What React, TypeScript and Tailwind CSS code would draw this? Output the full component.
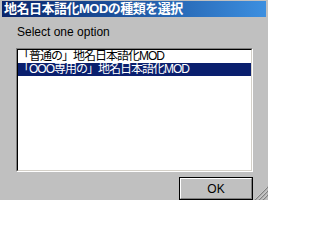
import React from "react";

const font = { fontFamily: '"Liberation Sans", "Noto Sans CJK JP", sans-serif' };

export default function App() {
  return (
    <div
      className="relative flex h-[200px] w-[268px] flex-col overflow-hidden bg-[#c0c0c0] text-black"
      style={font}
    >
      <div className="mx-[2px] mt-[1px] flex h-[16px] items-center bg-gradient-to-r from-[#0a246a] to-[#3c8fe0] pl-[2px]">
        <span className="text-[13px] font-bold leading-[16px] tracking-[-0.5px] text-white">
          地名日本語化MODの種類を選択
        </span>
      </div>
      <div className="pl-[17px] pt-[8px] text-[12px] leading-[14px]">Select one option</div>
      <div className="ml-[16px] mt-[9px] h-[128px] w-[237px] border border-b-white border-l-[#808080] border-r-white border-t-[#808080]">
        <div className="flex h-full flex-col border border-b-[#d4d0c8] border-l-black border-r-[#d4d0c8] border-t-black bg-white text-[12px] leading-[13px] tracking-[-1px]">
          <div className="h-[13px] whitespace-nowrap">「普通の」地名日本語化MOD</div>
          <div className="h-[13px] whitespace-nowrap bg-[#0a1f6e] text-white">
            「OOO専用の」地名日本語化MOD
          </div>
        </div>
      </div>
      <div className="ml-[179px] mt-[5px] h-[23px] w-[74px] shrink-0 border border-black">
        <div className="flex h-full items-center justify-center border border-b-[#808080] border-l-white border-r-[#808080] border-t-white text-[12px] leading-[14px]">
          OK
        </div>
      </div>
      <svg
        className="absolute bottom-0 right-0"
        width="14"
        height="14"
        viewBox="0 0 14 14"
      >
        <line x1="13" y1="1" x2="1" y2="13" stroke="#ffffff" strokeWidth="1" />
        <line x1="14" y1="1" x2="1" y2="14" stroke="#808080" strokeWidth="1.2" />
        <line x1="13" y1="5" x2="5" y2="13" stroke="#ffffff" strokeWidth="1" />
        <line x1="14" y1="5" x2="5" y2="14" stroke="#808080" strokeWidth="1.2" />
        <line x1="13" y1="9" x2="9" y2="13" stroke="#ffffff" strokeWidth="1" />
        <line x1="14" y1="9" x2="9" y2="14" stroke="#808080" strokeWidth="1.2" />
      </svg>
    </div>
  );
}
